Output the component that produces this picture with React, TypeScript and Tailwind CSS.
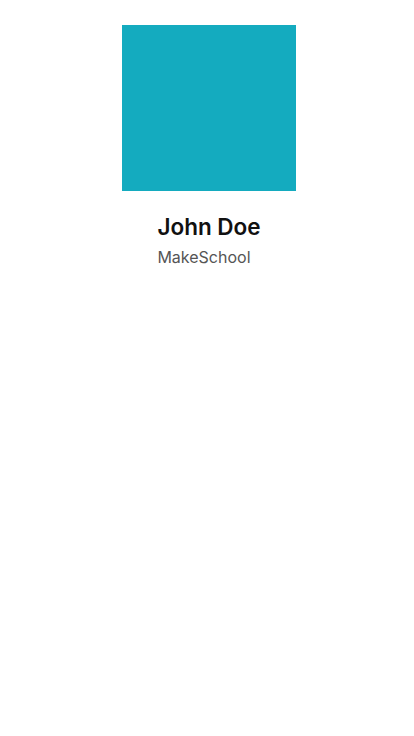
export default function App() {
  return (
    <div
      className="flex min-h-[736px] w-full flex-col items-center bg-white pl-[4px] pt-[25px]"
      style={{ fontFamily: "Inter, 'Liberation Sans', sans-serif" }}
    >
      <div className="h-[166px] w-[174px] bg-[#14abbf]" />
      <div className="mt-[21px] flex flex-col items-start">
        <h1 className="text-[22.5px] font-semibold leading-[30px] text-[#111111]">John Doe</h1>
        <p className="mt-[4px] text-[16px] leading-[22px] text-[#555555]">MakeSchool</p>
      </div>
    </div>
  );
}
